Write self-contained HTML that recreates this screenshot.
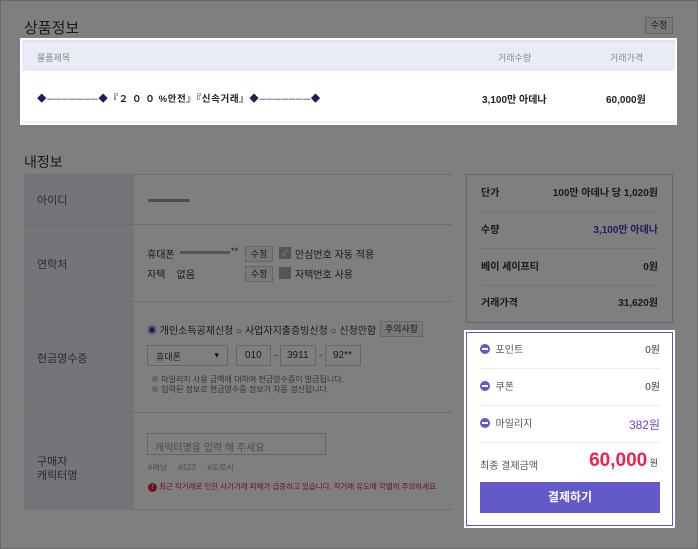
<!DOCTYPE html>
<html><head><meta charset="utf-8"><style>
*{box-sizing:border-box;margin:0;padding:0}
body{width:698px;height:549px;overflow:hidden;background:#fff;font-family:"Liberation Sans","Noto Sans CJK KR",sans-serif;position:relative;color:#333}
.a{position:absolute;white-space:nowrap}
.ov{position:absolute;left:0;top:0;width:698px;height:549px;background:rgba(0,0,0,0.5);z-index:5}
.hi{z-index:10}
.lbl{background:#e8ebf5}
.btn{position:absolute;border:1px solid #ccc;background:#f3f3f3;font-size:9px;text-align:center;color:#333}
.row{position:absolute;left:14px;right:14px;border-bottom:1px solid #e6e6ee;font-size:10px}
</style></head><body>
<div class="a" style="left:0;top:0;width:698px;height:549px;border:1px solid #d4d4d4"></div>
<div class="a" style="left:24px;top:17px;font-size:15px;color:#333">상품정보</div>
<div class="btn" style="left:645px;top:17px;width:28px;height:17px;line-height:15px">수정</div>

<div class="a" style="left:24px;top:152px;font-size:14px;color:#333">내정보</div>
<div class="a" style="left:24px;top:174px;width:428px;height:336px;border-top:1px solid #ddd;border-bottom:1px solid #ddd"></div>
<div class="a lbl" style="left:24px;top:175px;width:110px;height:335px"></div>
<div class="a" style="left:24px;top:224px;width:428px;border-top:1px solid #ddd"></div>
<div class="a" style="left:24px;top:301px;width:428px;border-top:1px solid #ddd"></div>
<div class="a" style="left:24px;top:412px;width:428px;border-top:1px solid #ddd"></div>
<div class="a" style="left:37px;top:192px;font-size:11px;color:#555">아이디</div>
<div class="a" style="left:148px;top:199px;width:42px;height:3px;background:#999;border-radius:2px"></div>
<div class="a" style="left:37px;top:256px;font-size:11px;color:#555">연락처</div>
<div class="a" style="left:147px;top:246px;font-size:10px">휴대폰</div>
<div class="a" style="left:180px;top:251px;width:50px;height:3px;background:#aaa"></div>
<div class="a" style="left:231px;top:246px;font-size:9px">**</div>
<div class="btn" style="left:245px;top:246px;width:28px;height:16px;line-height:14px">수정</div>
<div class="a" style="left:279px;top:247px;width:12px;height:12px;background:#aaa;color:#fff;font-size:9px;line-height:12px;text-align:center">✓</div>
<div class="a" style="left:295px;top:246px;font-size:10px">안심번호 자동 적용</div>
<div class="a" style="left:147px;top:266px;font-size:10px">자택 &nbsp;&nbsp;&nbsp;없음</div>
<div class="btn" style="left:245px;top:266px;width:28px;height:16px;line-height:14px">수정</div>
<div class="a" style="left:279px;top:267px;width:12px;height:12px;background:#aaa"></div>
<div class="a" style="left:295px;top:266px;font-size:10px">자택번호 사용</div>
<div class="a" style="left:37px;top:350px;font-size:11px;color:#555">현금영수증</div>
<div class="a" style="left:147px;top:322px;font-size:10px"><span style="color:#3b3bb0">◉</span> 개인소득공제신청 ○ 사업자지출증빙신청 ○ 신청안함</div>
<div class="btn" style="left:380px;top:321px;width:43px;height:16px;line-height:14px">주의사항</div>
<div class="a" style="left:147px;top:345px;width:81px;height:21px;border:1px solid #ccc;font-size:9px;padding:4px 8px">휴대폰 <span style="float:right">▾</span></div>
<div class="a" style="left:236px;top:345px;width:35px;height:21px;border:1px solid #ccc;font-size:10px;padding:4px 8px">010</div>
<div class="a" style="left:274px;top:350px;font-size:9px">-</div>
<div class="a" style="left:280px;top:345px;width:36px;height:21px;border:1px solid #ccc;font-size:10px;padding:4px 6px">3911</div>
<div class="a" style="left:319px;top:350px;font-size:9px">-</div>
<div class="a" style="left:325px;top:345px;width:36px;height:21px;border:1px solid #ccc;font-size:10px;padding:4px 7px">92**</div>
<div class="a" style="left:151px;top:374px;font-size:8px;color:#666">※ 마일리지 사용 금액에 대하여 현금영수증이 발급됩니다.</div>
<div class="a" style="left:151px;top:384px;font-size:8px;color:#666">※ 입력된 정보로 현금영수증 정보가 자동 갱신됩니다.</div>
<div class="a" style="left:37px;top:455px;font-size:11px;color:#555;line-height:14px;white-space:normal">구매자<br>캐릭터명</div>
<div class="a" style="left:147px;top:433px;width:179px;height:22px;border:1px solid #ccc;font-size:10px;padding:5px 7px;color:#999">캐릭터명을 입력 해 주세요.</div>
<div class="a" style="left:148px;top:462px;font-size:8px;color:#999">#래닝 &nbsp;&nbsp;&nbsp;&nbsp;#123 &nbsp;&nbsp;&nbsp;&nbsp;#도로시</div>
<div class="a" style="left:148px;top:481px;font-size:7.6px;color:#e0203c;letter-spacing:-0.1px"><span style="display:inline-block;width:9px;height:9px;border-radius:50%;background:#e0203c;color:#fff;font-size:7px;text-align:center;line-height:9px">!</span> 최근 직거래로 인한 사기거래 피해가 급증하고 있습니다. 직거래 유도에 각별히 주의하세요.</div>

<div class="a" style="left:466px;top:174px;width:207px;height:149px;border:1px solid #c9cde8;font-weight:bold">
 <div class="row" style="top:0;height:37px;line-height:37px">단가<span style="float:right">100만 아데나 당 1,020원</span></div>
 <div class="row" style="top:37px;height:37px;line-height:37px">수량<span style="float:right;color:#5a2fbf">3,100만 아데나</span></div>
 <div class="row" style="top:74px;height:37px;line-height:37px">베이 세이프티<span style="float:right">0원</span></div>
 <div class="row" style="top:111px;height:36px;line-height:36px;border:0">거래가격<span style="float:right">31,620원</span></div>
</div>

<div class="ov"></div>

<div class="a hi" style="left:20px;top:38px;width:657px;height:87px;background:#fff;border:2px solid #fff">
 <div class="a" style="left:0;top:0;width:653px;height:31px;background:#e9ecf6;border-top:2px solid #dde1f0"></div>
 <div class="a" style="left:15px;top:11px;font-size:9px;color:#888">물품제목</div>
 <div class="a" style="left:476px;top:11px;font-size:9px;color:#888">거래수량</div>
 <div class="a" style="left:588px;top:11px;font-size:9px;color:#888">거래가격</div>
 <div class="a" style="left:15px;top:51px;font-size:9.5px;color:#222;font-weight:bold;letter-spacing:0.6px"><span style="color:#1e1e5a">◆───────◆</span>『２ ０ ０ %안전』『신속거래』<span style="color:#1e1e5a">◆───────◆</span></div>
 <div class="a" style="left:460px;top:51px;font-size:10px;color:#222;font-weight:bold">3,100만 아데나</div>
 <div class="a" style="left:584px;top:51px;font-size:10px;color:#222;font-weight:bold">60,000원</div>
 <div class="a" style="left:0;top:81px;width:653px;border-top:2px solid #eef0f5"></div>
</div>

<div class="a hi" style="left:464px;top:330px;width:211px;height:198px;background:#fff;border:2px solid #fff;outline:1px solid #5a55c8;outline-offset:-3px">
 <div class="a" style="left:14px;top:0;width:180px;height:37px;border-bottom:1px solid #eee;font-size:10px;line-height:38px;color:#555"><span style="display:inline-block;width:10px;height:10px;border-radius:50%;background:#5f5bc9;vertical-align:-1px;position:relative"><span style="position:absolute;left:2px;top:4px;width:6px;height:2px;background:#fff"></span></span>&nbsp; 포인트<span style="float:right;color:#333">0원</span></div>
 <div class="a" style="left:14px;top:37px;width:180px;height:37px;border-bottom:1px solid #eee;font-size:10px;line-height:38px;color:#555"><span style="display:inline-block;width:10px;height:10px;border-radius:50%;background:#5f5bc9;vertical-align:-1px;position:relative"><span style="position:absolute;left:2px;top:4px;width:6px;height:2px;background:#fff"></span></span>&nbsp; 쿠폰<span style="float:right;color:#333">0원</span></div>
 <div class="a" style="left:14px;top:74px;width:180px;height:37px;border-bottom:1px solid #eee;font-size:10px;line-height:38px;color:#555"><span style="display:inline-block;width:10px;height:10px;border-radius:50%;background:#5f5bc9;vertical-align:-1px;position:relative"><span style="position:absolute;left:2px;top:4px;width:6px;height:2px;background:#fff"></span></span>&nbsp; 마일리지<span style="float:right;color:#7a3fd0;font-size:12px">382원</span></div>
 <div class="a" style="left:14px;top:125px;font-size:10px;color:#555">최종 결제금액</div>
 <div class="a" style="right:15px;top:118px;font-size:19px;font-weight:bold;color:#f0204f">60,000<span style="font-size:9px;color:#444;font-weight:normal"> 원</span></div>
 <div class="a" style="left:14px;top:150px;width:180px;height:31px;background:#6359c9;color:#fff;font-size:12px;font-weight:bold;text-align:center;line-height:31px">결제하기</div>
</div>
</body></html>
